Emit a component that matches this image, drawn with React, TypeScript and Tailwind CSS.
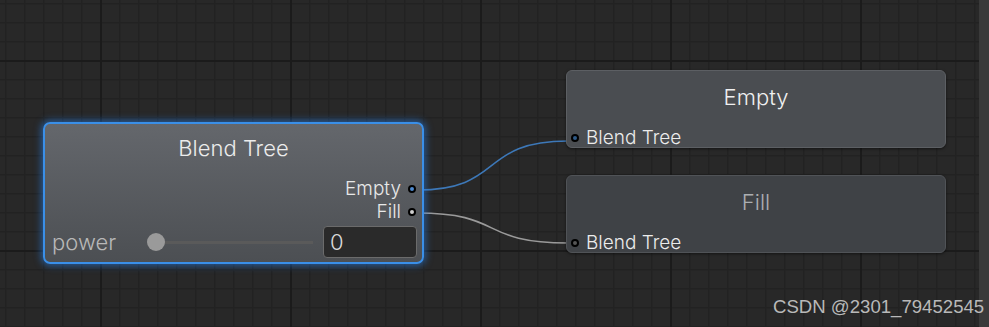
import React from "react";

function Grid() {
  return (
    <svg className="absolute inset-0 h-full w-full" xmlns="http://www.w3.org/2000/svg">
      <defs>
        <pattern id="minor" x="5" y="3" width="19" height="19" patternUnits="userSpaceOnUse">
          <rect x="0" y="0" width="19" height="19" fill="#282828" />
          <rect x="0" y="0" width="1.5" height="19" fill="#222222" />
          <rect x="0" y="0" width="19" height="1.5" fill="#222222" />
        </pattern>
        <pattern id="major" x="100" y="60" width="190" height="190" patternUnits="userSpaceOnUse">
          <rect x="0" y="0" width="2" height="190" fill="#1b1b1b" />
          <rect x="0" y="0" width="190" height="2" fill="#1b1b1b" />
        </pattern>
      </defs>
      <rect width="100%" height="100%" fill="url(#minor)" />
      <rect width="100%" height="100%" fill="url(#major)" />
    </svg>
  );
}

function Port({ fill }: { fill: string }) {
  return (
    <span
      className="inline-block h-[8px] w-[8px] rounded-full border-2 border-black"
      style={{ backgroundColor: fill }}
    />
  );
}

function Wires() {
  return (
    <svg className="pointer-events-none absolute inset-0 h-full w-full" xmlns="http://www.w3.org/2000/svg">
      <path d="M417 190 C 505 190, 478 141, 568 141" stroke="#3d78b8" strokeWidth="1.6" fill="none" />
      <path d="M417 213 C 505 213, 478 243, 568 243" stroke="#9a9a9a" strokeWidth="1.6" fill="none" />
    </svg>
  );
}

export default function App() {
  return (
    <div
      className="flex h-[327px] w-[989px] overflow-hidden bg-[#282828]"
      style={{ fontFamily: "Inter, 'Noto Sans', sans-serif" }}
    >
      {/* left panel strip */}
      <div className="flex w-[11px] flex-col bg-[#383838]">
        <div className="h-[38px]" />
        <div className="h-[2px] bg-[#252525]" />
      </div>
      <div className="w-[2px] bg-[#1f1f1f]" />

      {/* canvas */}
      <div className="relative flex-1">
        <div className="absolute left-[-13px] top-0 h-full w-[989px]">
          <Grid />
          <Wires />

          {/* Blend Tree node */}
          <div className="absolute left-[43px] top-[122px] flex h-[142px] w-[381px] flex-col rounded-[7px] border-2 border-[#3a8fe8] bg-gradient-to-b from-[#64676c] to-[#4c4f53] shadow-[0_0_7px_2px_rgba(40,130,235,0.55)]">
            <div className="mt-[10px] text-center text-[22px] font-light leading-[28px] text-[#ececec]">Blend Tree</div>
            <div className="mt-[16px] flex items-center justify-end gap-[7px] pr-[6px] text-[19px] font-light leading-[22px] text-[#e8e8e8]">
              <span>Empty</span>
              <Port fill="#4d8ad0" />
            </div>
            <div className="flex items-center justify-end gap-[7px] pr-[6px] text-[19px] font-light leading-[23px] text-[#e8e8e8]">
              <span>Fill</span>
              <Port fill="#d0d0d0" />
            </div>
            <div className="mt-[3px] flex h-[32px] items-center pl-[7px] pr-[5px]">
              <span className="w-[95px] text-[22px] font-light text-[#b8b8b8]">power</span>
              <div className="relative flex h-[18px] w-[166px] items-center">
                <div className="ml-[9px] h-[3px] flex-1 bg-[#5a5a5a]" />
                <div className="absolute left-0 top-0 h-[18px] w-[18px] rounded-full bg-[#9a9a9a]" />
              </div>
              <div className="ml-[10px] flex h-[32px] flex-1 items-center rounded-[4px] border border-[#6b6b6b] bg-[#2a2a2a] pl-[6px] text-[22px] font-light text-[#dadada]">
                0
              </div>
            </div>
          </div>

          {/* Empty node */}
          <div className="absolute left-[566px] top-[70px] flex h-[78px] w-[380px] flex-col rounded-[6px] border border-[#5c5f63] bg-[#4a4d51] shadow-[0_1px_3px_rgba(0,0,0,0.5)]">
            <div className="mt-[12px] text-center text-[22px] font-light leading-[28px] text-[#f0f0f0]">Empty</div>
            <div className="mt-[16px] flex items-center gap-[7px] pl-[4px] text-[19px] font-light leading-[22px] text-[#ececec]">
              <Port fill="#2e5a88" />
              <span>Blend Tree</span>
            </div>
          </div>

          {/* Fill node */}
          <div className="absolute left-[566px] top-[175px] flex h-[78px] w-[380px] flex-col rounded-[6px] border border-[#505357] bg-[#3f4246] shadow-[0_1px_3px_rgba(0,0,0,0.5)]">
            <div className="mt-[12px] text-center text-[22px] font-light leading-[28px] text-[#acaeb1]">Fill</div>
            <div className="mt-[16px] flex items-center gap-[7px] pl-[4px] text-[19px] font-light leading-[22px] text-[#ececec]">
              <Port fill="#555555" />
              <span>Blend Tree</span>
            </div>
          </div>
        </div>
      </div>

      {/* right strip */}
      <div className="w-[4px] bg-[#202020]" />
      <div className="relative w-[10px] bg-[#3a3a3a]" />

      {/* watermark */}
      <div
        className="absolute left-[773px] top-[296px] text-[18.6px] leading-[22px] text-[#b9b9b9]"
        style={{ fontFamily: "'Liberation Sans', Arial, sans-serif" }}
      >
        CSDN @2301_79452545
      </div>
    </div>
  );
}
